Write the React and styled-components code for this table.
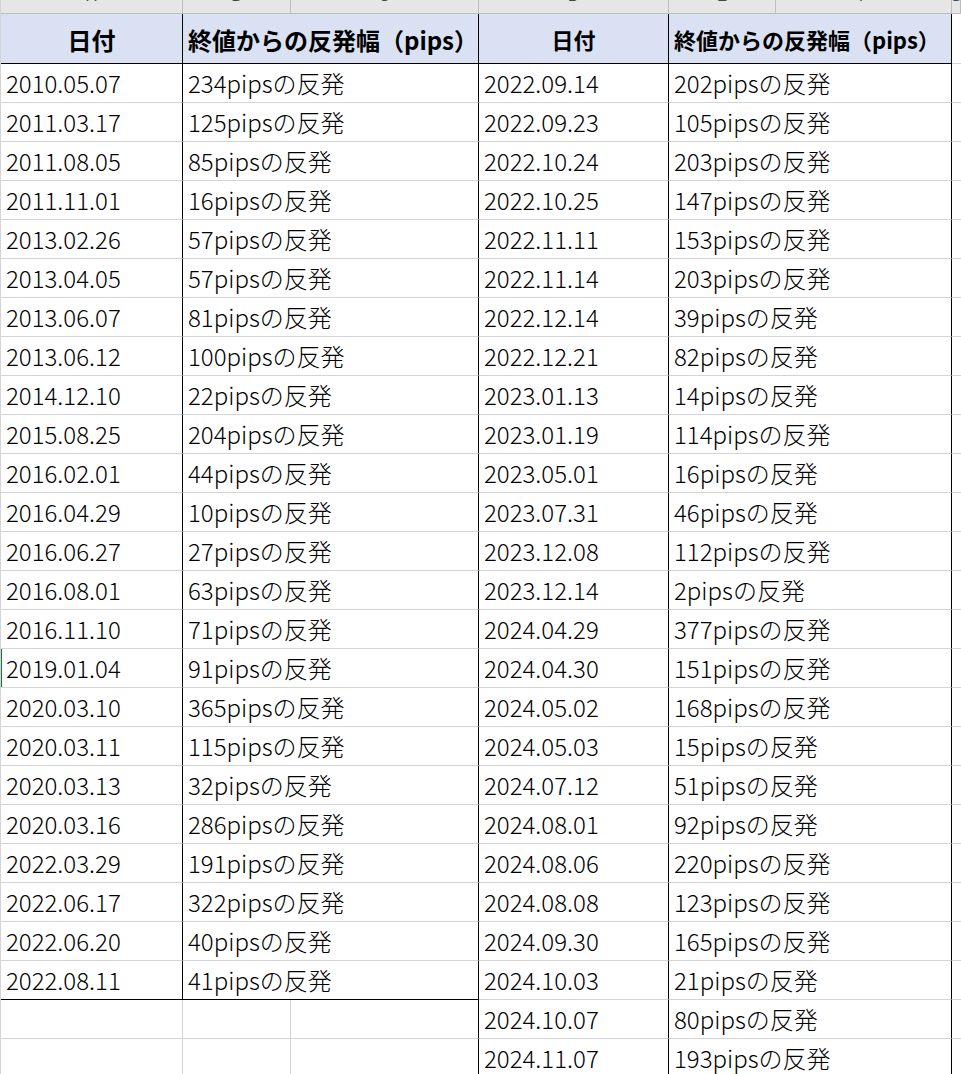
import React from "react";
import styled, { createGlobalStyle, css } from "styled-components";

const Global = createGlobalStyle`
  html, body { margin: 0; padding: 0; background: #fff; overflow: hidden; }
  body { font-family: "Noto Sans CJK JP", "Noto Sans", sans-serif; }
`;

const BLACK = "#000";
const GRID = "#d4d4d4";

const Sheet = styled.div`
  display: grid;
  grid-template-columns: 182px 108px 188px 190px 107px 176px 1fr;
  grid-template-rows: 14px 50px;
  grid-auto-rows: 39px;
  width: 961px;
  height: 1074px;
  overflow: hidden;
  border-left: 1px solid ${GRID};
  box-sizing: border-box;
`;

const ColHead = styled.div`
  box-sizing: border-box;
  background: #e6e6e6;
  border-bottom: 1px solid #bdbdbd;
  border-right: 1px solid #bdbdbd;
  overflow: hidden;
  display: flex;
  justify-content: center;
  font-family: "Liberation Sans", Arial, sans-serif;
  font-size: 15px;
  color: #444;
  line-height: 14px;
  & > span { margin-top: -11px; }
`;

const Cell = styled.div`
  box-sizing: border-box;
  display: flex;
  align-items: center;
  justify-content: ${(p) => (p.$center ? "center" : "flex-start")};
  padding-left: ${(p) => (p.$center ? "0" : "5px")};
  padding-top: ${(p) => (p.$head ? "1px" : "0")};
  padding-bottom: ${(p) => (p.$head ? "0" : "2px")};
  grid-column: ${(p) => (p.$span ? `span ${p.$span}` : "auto")};
  background: ${(p) => (p.$head ? "#d9e1f2" : "#fff")};
  border-right: 1px solid ${(p) => (p.$rb ? BLACK : GRID)};
  border-bottom: 1px solid ${(p) => (p.$bb ? BLACK : GRID)};
  font-size: ${(p) => p.$size || 24}px;
  font-weight: ${(p) => (p.$head ? 700 : 300)};
  color: #000;
  white-space: nowrap;
  overflow: hidden;
  ${(p) =>
    p.$noRight &&
    css`
      border-right: none;
    `}
  ${(p) =>
    p.$selected &&
    css`
      overflow: visible;
      box-shadow: -1px 0 0 #217346, inset 1px 0 0 #217346;
    `}
`;

const left = [
  ["2010.05.07", 234], ["2011.03.17", 125], ["2011.08.05", 85], ["2011.11.01", 16],
  ["2013.02.26", 57], ["2013.04.05", 57], ["2013.06.07", 81], ["2013.06.12", 100],
  ["2014.12.10", 22], ["2015.08.25", 204], ["2016.02.01", 44], ["2016.04.29", 10],
  ["2016.06.27", 27], ["2016.08.01", 63], ["2016.11.10", 71], ["2019.01.04", 91],
  ["2020.03.10", 365], ["2020.03.11", 115], ["2020.03.13", 32], ["2020.03.16", 286],
  ["2022.03.29", 191], ["2022.06.17", 322], ["2022.06.20", 40], ["2022.08.11", 41],
];

const right = [
  ["2022.09.14", 202], ["2022.09.23", 105], ["2022.10.24", 203], ["2022.10.25", 147],
  ["2022.11.11", 153], ["2022.11.14", 203], ["2022.12.14", 39], ["2022.12.21", 82],
  ["2023.01.13", 14], ["2023.01.19", 114], ["2023.05.01", 16], ["2023.07.31", 46],
  ["2023.12.08", 112], ["2023.12.14", 2], ["2024.04.29", 377], ["2024.04.30", 151],
  ["2024.05.02", 168], ["2024.05.03", 15], ["2024.07.12", 51], ["2024.08.01", 92],
  ["2024.08.06", 220], ["2024.08.08", 123], ["2024.09.30", 165], ["2024.10.03", 21],
  ["2024.10.07", 80], ["2024.11.07", 193],
];

const letters = ["A", "B", "C", "D", "E", "F", "G"];
const TITLE = "終値からの反発幅（pips）";

export default function App() {
  const rows = [];
  for (let i = 0; i < right.length; i++) {
    const l = left[i];
    const r = right[i];
    const lastLeft = i === left.length - 1;
    if (l) {
      rows.push(
        <Cell key={`a${i}`} $rb $bb={lastLeft} $selected={l[0] === "2019.01.04"}>
          {l[0]}
        </Cell>,
        <Cell key={`b${i}`} $span={2} $rb $bb={lastLeft}>
          {l[1]}pipsの反発
        </Cell>
      );
    } else {
      rows.push(
        <Cell key={`a${i}`} />,
        <Cell key={`b${i}`} />,
        <Cell key={`c${i}`} $rb />
      );
    }
    rows.push(
      <Cell key={`d${i}`} $rb>{r[0]}</Cell>,
      <Cell key={`e${i}`} $span={2} $rb>
        {r[1]}pipsの反発
      </Cell>,
      <Cell key={`g${i}`} $noRight />
    );
  }

  return (
    <>
      <Global />
      <Sheet>
        {letters.map((c) => (
          <ColHead key={c}>
            <span>{c}</span>
          </ColHead>
        ))}
        <Cell $head $center $rb $bb $size={24}>日付</Cell>
        <Cell $head $span={2} $rb $bb $size={24}>{TITLE}</Cell>
        <Cell $head $center $rb $bb $size={22}>日付</Cell>
        <Cell $head $span={2} $rb $bb $size={22}>{TITLE}</Cell>
        <Cell $noRight />
        {rows}
      </Sheet>
    </>
  );
}
